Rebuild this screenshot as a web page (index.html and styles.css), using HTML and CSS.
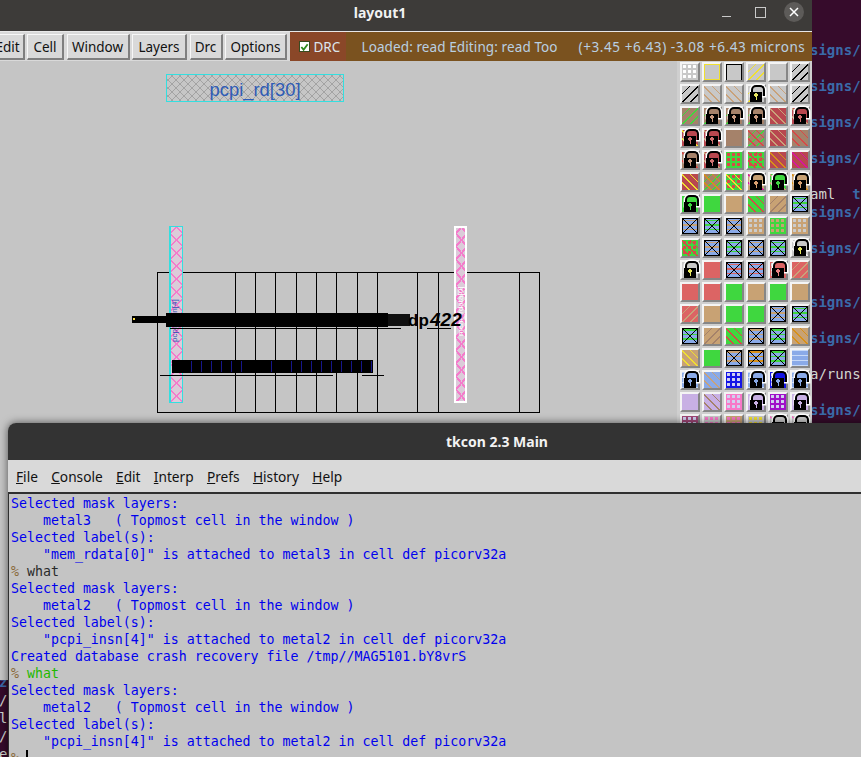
FILE: index.html
```html
<!DOCTYPE html>
<html lang="en">
<head>
    <meta charset="UTF-8">
    <meta name="viewport" content="width=device-width, initial-scale=1.0">
    <title>layout1 - tkcon 2.3 Main</title>
    <link rel="stylesheet" href="styles.css">
</head>
<body>
<pre class="terminal"><b>signs/</b>

<b>signs/</b>

<b>signs/</b>

<b>signs/</b>

aml  <b>t</b>
<b>signs/</b>

<b>signs/</b>


<b>signs/</b>

<b>signs/</b>

a/runs

<b>signs/</b></pre>
<pre class="terminal-left"><b>z</b>
/
l
/
e</pre>

<div class="window layout">
    <div class="titlebar">
        <span>layout1</span>
        <div class="controls">
            <i class="min"></i>
            <i class="max"></i>
            <i class="close">
                <svg width="12" height="12" viewBox="0 0 12 12"><path d="M2 2l8 8M10 2l-8 8" stroke="#fff" stroke-width="1.5"/></svg>
            </i>
        </div>
    </div>
    <div class="toolbar">
        <button class="btn-edit">Edit</button>
        <button class="btn-cell">Cell</button>
        <button class="btn-window">Window</button>
        <button class="btn-layers">Layers</button>
        <button class="btn-drc">Drc</button>
        <button class="btn-options">Options</button>
        <div class="drc"><i class="check"><svg width="10" height="10" viewBox="0 0 10 10"><path d="M1.5 5l2.5 3 4.5-6" fill="none" stroke="#2e8b1e" stroke-width="2"/></svg></i>DRC</div>
        <div class="status">
            <span class="loaded">Loaded: read Editing: read Too</span>
            <span class="coords">(+3.45 +6.43) -3.08 +6.43 microns</span>
        </div>
    </div>
    <div class="body">
        <div class="canvas">
            <svg class="drawing" width="729" height="619" viewBox="-52 61 729 619" shape-rendering="crispEdges">
                <defs>
                    <pattern id="hatch" width="8" height="8" patternUnits="userSpaceOnUse">
                        <rect width="8" height="8" fill="#c6c6c6"/>
                        <path d="M0 0l8 8M8 0l-8 8" stroke="#a3a3a3" stroke-width="1"/>
                    </pattern>
                    <pattern id="pink" x="170" y="227" width="13" height="13" patternUnits="userSpaceOnUse">
                        <rect width="13" height="13" fill="#dccbd9"/>
                        <path d="M6.5 0L13 6.5L6.5 13L0 6.5Z" fill="none" stroke="#f47ccb" stroke-width="1.8"/>
                    </pattern>
                    <pattern id="pink2" x="456" y="227" width="11" height="13" patternUnits="userSpaceOnUse">
                        <rect width="11" height="13" fill="#dccbd9"/>
                        <path d="M5.5 0L11 6.5L5.5 13L0 6.5Z" fill="none" stroke="#f47ccb" stroke-width="1.8"/>
                    </pattern>
                </defs>

                <rect x="166" y="74.5" width="177" height="27" fill="url(#hatch)" stroke="#33dfe0"/>
                <text class="cell-label" x="255" y="96" text-anchor="middle">pcpi_rd[30]</text>

                <rect x="157.5" y="272.5" width="382" height="140" fill="none" stroke="#000"/>
                <path d="M235.5 272v141M255.5 272v141M275.5 272v141M296.5 272v141M316.5 272v141M336.5 272v141M357.5 272v141M377.5 272v141M417.5 272v141M438.5 272v141M519.5 272v141" stroke="#000"/>

                <rect x="169.5" y="226.5" width="13" height="176" fill="url(#pink)" stroke="#33dfe0"/>
                <rect x="170" y="227" width="1" height="175" fill="#33dfe0"/>
                <rect x="455" y="227" width="11" height="175" fill="url(#pink2)" stroke="#fff" stroke-width="2"/>
                <text class="tiny blue" transform="translate(177 342) rotate(-90)">pcpi_insn[4]</text>
                <text class="tiny white" transform="translate(463 336) rotate(-90)">mem_rdata[0]</text>

                <rect x="132" y="316" width="34" height="7" fill="#000"/>
                <rect x="166" y="313" width="222" height="14" fill="#000"/>
                <rect x="388" y="314" width="22" height="12" fill="#101010"/>
                <rect x="133" y="318" width="2" height="2" fill="#ffe14d"/>
                <text class="overlap-thin" x="408" y="326">dp</text>
                <text class="overlap" x="430" y="326">422</text>
                <path d="M170 328h231M427 328h24M160 375h173M362 375h22" stroke="#000"/>

                <rect x="172" y="360" width="201" height="13" fill="#000"/>
                <path d="M191 361v11M201 361v11M211 361v11M221 361v11M231 361v11M241 361v11M271 361v11M291 361v11M301 361v11M311 361v11M321 361v11M331 361v11M341 361v11M351 361v11M361 361v11M371 361v11" stroke="#16168c"/>
            </svg>
        </div>
        <div class="palette">
            <i class="t gray dots-white"></i><i class="t gray box-yellow"></i><i class="t gray box-black"></i><i class="t gray b-yellow"></i><i class="t gray"></i><i class="t gray b-black"></i>
            <i class="t gray b-black"></i><i class="t gray f-tan"></i><i class="t gray f-tan"></i><i class="t gray b-yellow lock"></i><i class="t gray f-tan"></i><i class="t gray b-black"></i>
            <i class="t brown b-green"></i><i class="t brown b-green lock"></i><i class="t brown b-green lock"></i><i class="t brown b-green lock"></i><i class="t red f-tan"></i><i class="t red f-tan lock"></i>
            <i class="t red f-yellow lock"></i><i class="t red f-tan lock"></i><i class="t brown"></i><i class="t brown f-red b-green"></i><i class="t red f-tan"></i><i class="t brown f-red"></i>
            <i class="t brown f-red lock"></i><i class="t red f-tan lock"></i><i class="t green dots-red"></i><i class="t green dots-red f-red"></i><i class="t red f-orange"></i><i class="t red f-magenta"></i>
            <i class="t red f-yellow"></i><i class="t brown f-orange b-green"></i><i class="t green f-yellow dots-red"></i><i class="t tan f-magenta lock"></i><i class="t green f-tan lock"></i><i class="t tan f-orange lock"></i>
            <i class="t green lock"></i><i class="t green"></i><i class="t tan"></i><i class="t green f-red"></i><i class="t tan b-brown"></i><i class="t blue x s-green"></i>
            <i class="t blue x s-tan"></i><i class="t blue x s-green"></i><i class="t blue x s-tan"></i><i class="t tan dots-gray"></i><i class="t green dots-tan"></i><i class="t tan dots-gray"></i>
            <i class="t green dots-red f-red"></i><i class="t blue x s-tan"></i><i class="t blue x s-green"></i><i class="t blue x s-tan"></i><i class="t blue x s-green"></i><i class="t gray f-white lock"></i>
            <i class="t gray lock"></i><i class="t salmon"></i><i class="t blue x s-red"></i><i class="t blue x s-red"></i><i class="t salmon dots-gray lock"></i><i class="t salmon b-tan"></i>
            <i class="t salmon"></i><i class="t salmon"></i><i class="t green"></i><i class="t tan"></i><i class="t green"></i><i class="t tan"></i>
            <i class="t salmon b-tan"></i><i class="t tan"></i><i class="t green"></i><i class="t green"></i><i class="t blue x s-tan"></i><i class="t blue x s-green"></i>
            <i class="t blue x s-green"></i><i class="t tan b-brown"></i><i class="t green f-red"></i><i class="t blue x s-tan"></i><i class="t blue x s-green"></i><i class="t tan f-orange"></i>
            <i class="t tan f-yellow"></i><i class="t green"></i><i class="t blue x s-tan"></i><i class="t blue x s-orange"></i><i class="t blue x s-green"></i><i class="t blue wave"></i>
            <i class="t blue wave lock"></i><i class="t blue wave f-tan"></i><i class="t navy dots-light"></i><i class="t blue wave lock"></i><i class="t navy dots-light lock"></i><i class="t blue wave lock"></i>
            <i class="t lilac"></i><i class="t lilac f-brown"></i><i class="t pink dots-light"></i><i class="t lilac lock"></i><i class="t purple dots-light"></i><i class="t lilac lock"></i>
            <i class="t dark-pink dots-light"></i><i class="t gray dots-pink"></i><i class="t tan dots-pink"></i><i class="t gray dots-yellow"></i><i class="t gray f-pink lock"></i><i class="t gray f-pink lock"></i>
        </div>
    </div>
</div>

<div class="window tkcon">
    <div class="titlebar">
        <span>tkcon 2.3 Main</span>
    </div>
    <div class="menubar">
        <span><u>F</u>ile</span>
        <span><u>C</u>onsole</span>
        <span><u>E</u>dit</span>
        <span><u>I</u>nterp</span>
        <span><u>P</u>refs</span>
        <span><u>H</u>istory</span>
        <span><u>H</u>elp</span>
    </div>
    <pre class="console">Selected mask layers:
    metal3   ( Topmost cell in the window )
Selected label(s):
    "mem_rdata[0]" is attached to metal3 in cell def picorv32a
<span class="prompt">%</span> <span class="cmd">what</span>
Selected mask layers:
    metal2   ( Topmost cell in the window )
Selected label(s):
    "pcpi_insn[4]" is attached to metal2 in cell def picorv32a
Created database crash recovery file /tmp//MAG5101.bY8vrS
<span class="prompt">%</span> <span class="cmd-ok">what</span>
Selected mask layers:
    metal2   ( Topmost cell in the window )
Selected label(s):
    "pcpi_insn[4]" is attached to metal2 in cell def picorv32a
<span class="prompt">%</span> <i class="cursor"></i></pre>
</div>
</body>
</html>
```

FILE: styles.css
```css
* {
    margin: 0;
    padding: 0;
    box-sizing: border-box;
}

html, body {
    width: 861px;
    height: 757px;
    overflow: hidden;
}

body {
    position: relative;
    background-color: #360b2b;
    font-family: "Noto Sans", sans-serif;
}

.terminal {
    position: absolute;
    top: 41px;
    left: 810px;
    font: 14px/18px "DejaVu Sans Mono", monospace;
    color: #d3d7cf;
}

.terminal b {
    color: #3a6aa8;
}

.terminal-left {
    position: absolute;
    top: 673px;
    left: -1px;
    font: 14px/18px "DejaVu Sans Mono", monospace;
    color: #d3d7cf;
}

.terminal-left b {
    color: #3a6aa8;
}

.window {
    position: absolute;
    z-index: 1;
    display: flex;
    flex-direction: column;
    overflow: hidden;
}

.titlebar {
    position: relative;
    flex: none;
    display: flex;
    align-items: center;
    justify-content: center;
    color: #f2f2f2;
    font-size: 14px;
    font-weight: 700;
}

/* layout window */
.layout {
    top: 0;
    left: -52px;
    width: 864px;
    height: 680px;
    background-color: #c5c5c5;
}

.layout .titlebar {
    height: 31px;
    padding-bottom: 6px;
    background-color: #3d3b39;
}

.controls {
    position: absolute;
    right: 8px;
    top: 2px;
    display: flex;
    align-items: center;
    gap: 14px;
}

.controls i {
    display: flex;
    align-items: center;
    justify-content: center;
    width: 20px;
    height: 20px;
}

.controls .min::after {
    content: '';
    width: 9px;
    height: 1px;
    margin-top: 9px;
    background-color: #c9c9c9;
}

.controls .max::after {
    content: '';
    width: 9px;
    height: 9px;
    border: 1px solid #c9c9c9;
}

.controls .close {
    border-radius: 50%;
    background-color: #5d5b59;
}

.toolbar {
    flex: none;
    display: flex;
    align-items: stretch;
    height: 30px;
    padding: 1px 0 0 43.5px;
    background-color: #d9d9d9;
    border-top: 1px solid #e8e8e8;
}

.toolbar button {
    flex: none;
    margin: 1px 2.5px 1px 0;
    padding: 0;
    border: 1px solid;
    border-width: 1px 2px 2px 1px;
    border-color: #f7f7f7 #7f7f7f #7f7f7f #f7f7f7;
    background-color: #d9d9d9;
    color: #111;
    font: 13.5px "Noto Sans", sans-serif;
}

.btn-edit { width: 33px; }
.btn-cell { width: 37px; }
.btn-window { width: 63px; }
.btn-layers { width: 55px; }
.btn-drc { width: 33px; }
.btn-options { width: 62px; }

.drc {
    flex: none;
    display: flex;
    align-items: center;
    gap: 4px;
    width: 56px;
    margin-top: -1px;
    padding-left: 9px;
    background-color: #8a4728;
    color: #dce6ee;
    font-size: 13.5px;
}

.check {
    display: flex;
    align-items: center;
    justify-content: center;
    width: 11px;
    height: 11px;
    background-color: #fff;
    border: 1px solid #3a4a20;
}

.status {
    flex: 1;
    display: flex;
    align-items: center;
    gap: 21px;
    margin-top: -1px;
    padding-left: 16px;
    background-color: #7a521f;
    color: #b9d0e2;
    font-size: 13.5px;
    white-space: nowrap;
}

.loaded {
    letter-spacing: 0.1px;
}

.coords {
    letter-spacing: 0.58px;
}

.body {
    flex: 1;
    display: flex;
    min-height: 0;
}

.canvas {
    flex: 1;
    min-width: 0;
}

.drawing {
    display: block;
}

.cell-label {
    font: 18.4px "Liberation Sans", sans-serif;
    fill: #2f5cb6;
}

.tiny {
    font: 8px "Liberation Sans", sans-serif;
}

.blue {
    fill: #2f4fb6;
}

.white {
    fill: #fff;
}

.overlap {
    font: italic 700 19px "Liberation Sans", sans-serif;
    fill: #000;
}

.overlap-thin {
    font: 700 17px "Liberation Sans", sans-serif;
    fill: #000;
}

/* layer palette */
.palette {
    flex: none;
    width: 135px;
    display: grid;
    grid-template-columns: repeat(6, 20px);
    grid-auto-rows: 20px;
    gap: 2px;
    padding: 1px 0 0 3px;
    background-color: #cfcfcf;
    overflow: hidden;
}

.t {
    position: relative;
    display: block;
    border: 2px solid;
    border-color: #f4f4f4 #868686 #868686 #f4f4f4;
    background-color: var(--bg);
    background-image:
        repeating-linear-gradient(45deg, transparent 0 4.9px, var(--f, transparent) 4.9px 5.7px),
        repeating-linear-gradient(-45deg, transparent 0 4.9px, var(--b, transparent) 4.9px 5.7px),
        radial-gradient(circle, var(--dot, transparent) 1.4px, transparent 1.9px);
    background-size: auto, auto, 5px 5px;
}

.gray { --bg: #c8c8c8; --k: #e8e860; }
.brown { --bg: #a5826a; --k: #c89a80; }
.red { --bg: #b8474f; --k: #d07070; }
.green { --bg: #3fd73f; --k: #3fd73f; }
.tan { --bg: #c8a274; --k: #d8a070; }
.salmon { --bg: #dc6464; --k: #e88080; }
.blue { --bg: #8aaae8; --k: #8aaae8; }
.navy { --bg: #1414e6; --k: #8aaae8; }
.lilac { --bg: #c8b0e4; --k: #c8b0e4; }
.pink { --bg: #f878c8; }
.purple { --bg: #a010c8; }
.dark-pink { --bg: #a04878; }

.f-tan { --f: #c9a27a; }
.f-yellow { --f: #f0e030; }
.f-red { --f: #d84848; }
.f-orange { --f: #d89018; }
.f-magenta { --f: #d814a0; }
.f-brown { --f: #a5826a; }
.f-white { --f: #f4f4f4; }
.f-pink { --f: #f878c8; }
.b-black { --b: #000; }
.b-yellow { --b: #f0e030; }
.b-green { --b: #3fd73f; }
.b-tan { --b: #c9a27a; }
.b-brown { --b: #a5826a; }

.dots-white { --dot: #fff; }
.dots-red { --dot: #d84848; }
.dots-gray { --dot: #cccccc; }
.dots-tan { --dot: #c8a274; }
.dots-light { --dot: #d0d0f0; }
.dots-pink { --dot: #f878c8; }
.dots-yellow { --dot: #f0e030; }

.box-yellow { box-shadow: inset 0 0 0 1px #f0e030; }
.box-black { box-shadow: inset 1px 1px 0 #000, inset -1px 0 0 #000; }

.wave {
    background-image: repeating-linear-gradient(0deg, #c8daf8 0 1.5px, transparent 1.5px 5px);
}

.wave.f-tan {
    background-image: repeating-linear-gradient(45deg, transparent 0 4.9px, #c9a27a 4.9px 5.7px);
}

/* crossed box, a contact layer */
.x::after {
    content: '';
    position: absolute;
    inset: 0;
    border: 1.5px solid #000;
    background-image:
        linear-gradient(45deg, transparent 47%, #000 47% 53%, transparent 53%),
        linear-gradient(-45deg, transparent 47%, #000 47% 53%, transparent 53%),
        repeating-linear-gradient(0deg, transparent 0 3px, var(--s) 3px 4.5px);
}

.s-green { --s: #3fd73f; }
.s-tan { --s: #c8a274; }
.s-red { --s: #dc6464; }
.s-orange { --s: #d89018; }

.lock::before {
    content: '';
    position: absolute;
    left: 3px;
    top: -1px;
    z-index: 1;
    width: 10px;
    height: 9px;
    background-color: var(--bg);
    border: 2px solid #000;
    border-bottom: none;
    border-radius: 5px 5px 0 0;
    box-shadow: 0 0 0 1.5px #fff;
}

.lock::after {
    content: '';
    position: absolute;
    left: 2px;
    top: 6px;
    z-index: 1;
    width: 12px;
    height: 10px;
    background-color: #000;
    background-image:
        radial-gradient(circle at 6px 3px, var(--k, #fff) 1.6px, transparent 2px),
        linear-gradient(var(--k, #fff), var(--k, #fff));
    background-size: auto, 1px 4px;
    background-position: 0 0, 5.5px 4px;
    background-repeat: no-repeat;
}

/* console window */
.tkcon {
    z-index: 2;
    top: 423px;
    left: 8px;
    width: 978px;
    height: 340px;
    border-radius: 8px 8px 0 0;
    background-color: #c4c4c4;
    box-shadow: 0 0 8px rgba(0, 0, 0, 0.6);
}

.tkcon .titlebar {
    height: 37px;
    background-color: #333;
}

.menubar {
    flex: none;
    display: flex;
    align-items: center;
    gap: 13.3px;
    height: 32px;
    padding-left: 8px;
    background-color: #d9d9d9;
    color: #111;
    font-size: 13.7px;
}

.console {
    flex: 1;
    padding: 1px 0 0 2px;
    border-top: 2px solid #2f2f2f;
    border-left: 1px solid #2f2f2f;
    font: 13.28px/17px "DejaVu Sans Mono", monospace;
    color: #0000ee;
}

.prompt {
    color: #8a6a3a;
}

.cmd {
    color: #2a2a2a;
}

.cmd-ok {
    color: #22b800;
}

.cursor {
    display: inline-block;
    width: 2px;
    height: 15px;
    background-color: #000;
    vertical-align: top;
    margin-left: -1px;
}
```
